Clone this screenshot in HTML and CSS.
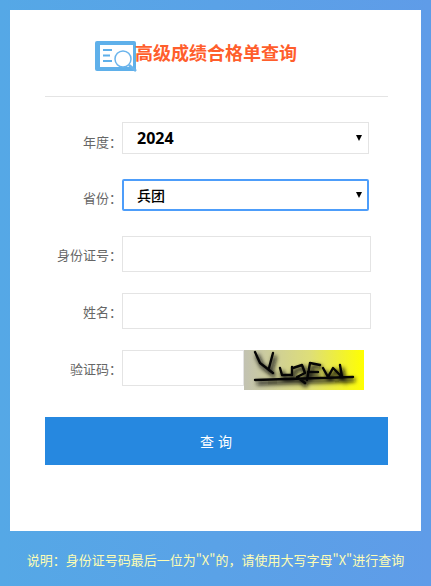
FILE: index.html
```html
<!DOCTYPE html>
<html lang="zh">
<head>
<meta charset="utf-8">
<title>高级成绩合格单查询</title>
<link rel="stylesheet" href="styles.css">
</head>
<body>
<main class="panel">
  <header class="head">
    <svg class="logo" viewBox="0 0 42 31" width="42" height="31" aria-hidden="true">
      <rect x="0" y="0" width="41" height="30" rx="2" fill="#5fb0ea"/>
      <rect x="5" y="4" width="33" height="22" fill="#fff"/>
      <path d="M8 9h9M8 14.500h7M8 20h9" stroke="#5fb0ea" stroke-width="2" fill="none"/>
      <circle cx="28" cy="18" r="8" fill="#fff" stroke="#6ab4ec" stroke-width="1.5"/>
      <path d="M34 24l7 6" stroke="#6ab4ec" stroke-width="2.6" fill="none"/>
    </svg>
    <h1 class="title">高级成绩合格单查询</h1>
  </header>
  <form class="form">
    <div class="row row-select">
      <label class="label label-first">年度：</label>
      <div class="select-wrap">
        <select class="select year"><option>2024</option></select>
      </div>
    </div>
    <div class="row row-select">
      <label class="label">省份：</label>
      <div class="select-wrap">
        <select class="select province focus"><option>兵团</option></select>
      </div>
    </div>
    <div class="row row-input row-id">
      <label class="label">身份证号：</label>
      <input class="input" type="text">
    </div>
    <div class="row row-input">
      <label class="label">姓名：</label>
      <input class="input" type="text">
    </div>
    <div class="row row-code">
      <label class="label">验证码：</label>
      <input class="input code" type="text">
      <svg class="captcha" viewBox="0 0 120 40" width="120" height="40" aria-label="验证码图片">
        <defs>
          <linearGradient id="cg" x1="0" x2="1" y1="0" y2="0">
            <stop offset="0" stop-color="#c2c2b2"/>
            <stop offset="0.55" stop-color="#dede78"/>
            <stop offset="1" stop-color="#ffff00"/>
          </linearGradient>
          <filter id="blur" x="-10%" y="-30%" width="120%" height="160%"><feGaussianBlur stdDeviation="2"/></filter>
        </defs>
        <rect width="120" height="40" fill="url(#cg)"/>
        <g class="scribble-shadow" filter="url(#blur)" transform="translate(2 3)">
          <path d="M11 2 L16 13 L29 23 M29 3 L25 18 M36 18 L38 25 L48 25 L48 17 M49 18 L58 15 L61 23 L53 27 L61 33 M66 13 L63 30 M66 13 L76 15 M64 22 L74 22 M79 18 L84 27 L89 18 L98 27 L96 15 M11 30 L109 27"/>
        </g>
        <g class="scribble">
          <path d="M11 2 L16 13 L29 23 M29 3 L25 18 M36 18 L38 25 L48 25 L48 17 M49 18 L58 15 L61 23 L53 27 L61 33 M66 13 L63 30 M66 13 L76 15 M64 22 L74 22 M79 18 L84 27 L89 18 L98 27 L96 15 M11 30 L109 27"/>
        </g>
      </svg>
    </div>
    <button class="submit" type="button">查 询</button>
  </form>
</main>
<footer class="note">说明：身份证号码最后一位为"X"的，请使用大写字母"X"进行查询</footer>
</body>
</html>
```

FILE: styles.css
```css
* { box-sizing: border-box; }
html, body { height: 100%; }
body {
  margin: 0;
  height: 586px;
  padding: 10px 10px 0;
  overflow: hidden;
  background: linear-gradient(90deg, #55a8e6, #5f9ce8);
  font-family: "Noto Sans CJK SC", "Liberation Sans", sans-serif;
}
.panel {
  height: 521px;
  padding: 0 33px 0 35px;
  background: #fff;
}
.head {
  display: flex;
  align-items: flex-start;
  height: 87px;
  padding: 31px 0 0 50px;
  border-bottom: 1px solid #e4e4e4;
}
.logo { flex: none; }
.title {
  margin: -1px 0 0 -2px;
  font-size: 18px;
  font-weight: 700;
  line-height: 24px;
  color: #ff5e2c;
  white-space: nowrap;
}
.form { display: flex; flex-direction: column; }
.row { display: flex; }
.row-select { height: 32px; margin-top: 25px; }
.row-input { height: 36px; margin-top: 21px; }
.row-id { margin-top: 25px; }
.row-code { height: 40px; margin-top: 21px; }
.label {
  flex: none;
  width: 77px;
  padding-top: 8px;
  font-size: 13px;
  line-height: 22px;
  color: #666;
  text-align: right;
  white-space: nowrap;
}
.label-first { padding-top: 9px; }
.select-wrap {
  position: relative;
  width: 247px;
  height: 32px;
}
.select-wrap::after {
  content: "";
  position: absolute;
  top: 13px;
  right: 7px;
  border-top: 6px solid #000;
  border-left: 3px solid transparent;
  border-right: 3px solid transparent;
  pointer-events: none;
}
.select {
  display: block;
  width: 100%;
  height: 32px;
  padding: 0 0 0 14px;
  appearance: none;
  background: #fff;
  border: 1px solid #e4e4e4;
  border-radius: 0;
  outline: none;
  font-family: inherit;
  font-weight: 700;
  color: #000;
}
.year { font-size: 16px; font-family: "Open Sans", "Noto Sans CJK SC", sans-serif; }
.province { padding-left: 13px; font-size: 14px; font-weight: 500; }
.focus { border: 2px solid #4d9dfa; border-radius: 2px; }
.input {
  width: 249px;
  height: 36px;
  padding: 0 10px;
  background: #fff;
  border: 1px solid #e4e4e4;
  outline: none;
}
.code { width: 122px; }
.captcha { flex: none; display: block; }
.scribble-shadow path { fill: none; stroke: #111; stroke-width: 3.5; }
.scribble path { fill: none; stroke: #050505; stroke-width: 2.4; stroke-linecap: round; stroke-linejoin: round; }
.submit {
  width: 343px;
  height: 48px;
  margin-top: 27px;
  padding: 0;
  background: #2688e0;
  border: 0;
  font-family: inherit;
  font-size: 14px;
  word-spacing: -1px;
  letter-spacing: 1px;
  color: #fff;
}
.note {
  padding-top: 13px;
  margin: 0 -10px;
  font-size: 13px;
  line-height: 32px;
  color: #fdfdb4;
  text-align: center;
  white-space: nowrap;
}
```
